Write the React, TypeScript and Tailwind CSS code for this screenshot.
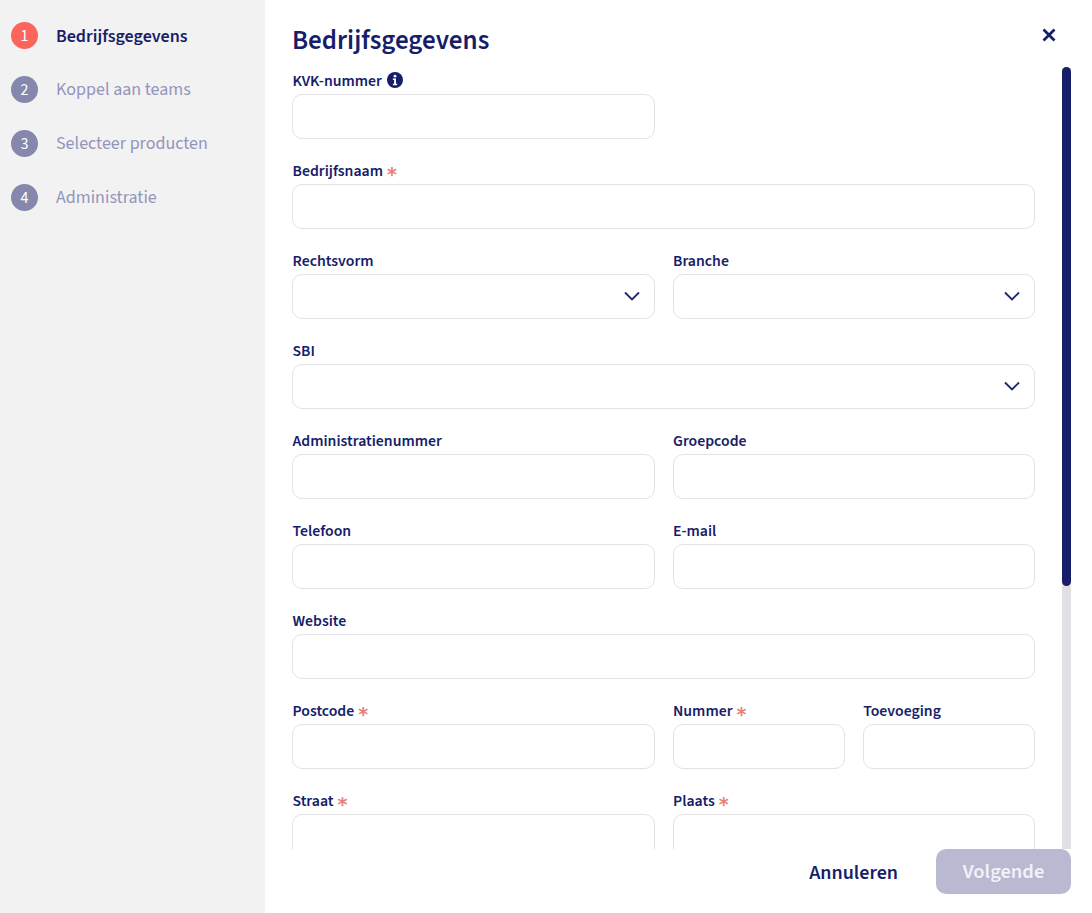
import React from "react";

const navy = "text-[#161d69]";

function Star() {
  return <span className="ml-[4px] h-[24px] font-['DejaVu_Sans',sans-serif] text-[19px] font-bold leading-[29px] text-[#e8807c]">*</span>;
}

function Info() {
  return (
    <svg viewBox="0 0 16 16" className="mb-[4px] ml-[5px] h-4 w-4">
      <circle cx="8" cy="8" r="8" fill="#161d69" />
      <circle cx="8" cy="4.2" r="1.4" fill="#fff" />
      <path d="M5.9 6.6h3.1v5.2h1.2v1.5H5.9v-1.5h1.2V8.1H5.9z" fill="#fff" />
    </svg>
  );
}

function Chevron() {
  return (
    <svg viewBox="0 0 16 10" fill="none" className="mb-[2px] h-[10px] w-4">
      <path d="M1 1.5l7 7 7-7" stroke="#1f2a72" strokeWidth="1.9" />
    </svg>
  );
}

function Field({ label, req, info, select, className = "" }: { label: string; req?: boolean; info?: boolean; select?: boolean; className?: string }) {
  return (
    <div className={className}>
      <div className={`flex h-[24px] items-center pb-[1px] pl-[0.5px] text-[15.75px] font-semibold ${navy}`}>
        {label}
        {req && <Star />}
        {info && <Info />}
      </div>
      <div className="flex h-[45px] items-center justify-end rounded-[10px] border border-[#e2e2e5] bg-white pr-[14px]">
        {select && <Chevron />}
      </div>
    </div>
  );
}

const steps = ["Bedrijfsgegevens", "Koppel aan teams", "Selecteer producten", "Administratie"];

export default function App() {
  return (
    <div className="flex h-[913px] w-[1092px] overflow-hidden bg-white font-['Source_Sans_3','Source_Sans_Pro','Noto_Sans',sans-serif]">
      <aside className="flex w-[265px] shrink-0 flex-col gap-[27px] bg-[#f2f2f2] pl-[11px] pt-[22px]">
        {steps.map((s, i) => (
          <div key={s} className="flex h-[27px] items-center gap-[18px]">
            <span className={`flex h-[27px] w-[27px] items-center justify-center rounded-full text-[16px] text-white ${i === 0 ? "bg-[#fb655c]" : "bg-[#8587ad]"}`}>
              {i + 1}
            </span>
            <span className={`text-[18px] ${i === 0 ? `pt-[1px] font-semibold ${navy}` : "text-[#9395bb]"}`}>{s}</span>
          </div>
        ))}
      </aside>
      <main className="flex w-[806px] shrink-0 flex-col">
        <header className="flex h-[67px] items-start justify-between pl-[27px] pr-[15px]">
          <h1 className={`mt-[23px] text-[27px] font-semibold leading-[36px] ${navy}`}>Bedrijfsgegevens</h1>
          <svg viewBox="0 0 14 14" className="mt-[28px] h-[14px] w-[14px]" fill="none">
            <path d="M1.5 1.5l11 11M12.5 1.5l-11 11" stroke="#161d69" strokeWidth="2.8" />
          </svg>
        </header>
        <div className="flex h-[782px] overflow-hidden">
          <div className="w-[770px] shrink-0 overflow-hidden pl-[27px]">
            <div className="grid w-[743px] grid-cols-2 gap-x-[18px] gap-y-[21px] pt-[3px]">
              <Field label="KVK-nummer" info />
              <div />
              <Field label="Bedrijfsnaam" req className="col-span-2" />
              <Field label="Rechtsvorm" select />
              <Field label="Branche" select />
              <Field label="SBI" select className="col-span-2" />
              <Field label="Administratienummer" />
              <Field label="Groepcode" />
              <Field label="Telefoon" />
              <Field label="E-mail" />
              <Field label="Website" className="col-span-2" />
              <Field label="Postcode" req />
              <div className="grid grid-cols-2 gap-x-[18px]">
                <Field label="Nummer" req />
                <Field label="Toevoeging" />
              </div>
              <Field label="Straat" req />
              <Field label="Plaats" req />
            </div>
          </div>
          <div className="ml-auto h-full w-[9px] rounded-t-full bg-[#e2e0e4]">
            <div className="h-[519px] rounded-full bg-[#161d69]" />
          </div>
        </div>
        <footer className="flex h-[64px] items-start justify-end">
          <button className={`mr-[38px] mt-[9px] h-[28px] text-[20px] font-semibold leading-[30px] ${navy}`}>Annuleren</button>
          <button className="h-[45px] w-[135px] rounded-[10px] bg-[#b9b9d2] pt-[1px] text-[20.5px] font-semibold text-[#f1f1f7]">Volgende</button>
        </footer>
      </main>
    </div>
  );
}
